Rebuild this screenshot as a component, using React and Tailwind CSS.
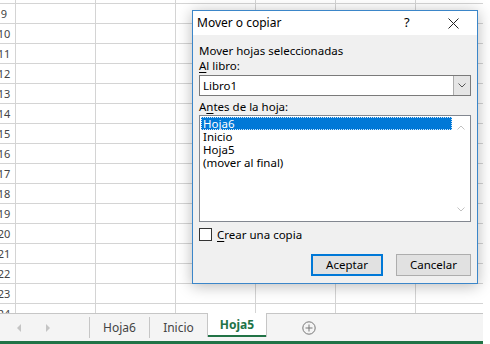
const ROWS = [8, 9, 10, 11, 12, 13, 14, 15, 16, 17, 18, 19, 20, 21, 22, 23, 24];
const COLS = [0, 1, 2, 3, 4, 5];
const SHEETS = ['Hoja6', 'Inicio', 'Hoja5', '(mover al final)'];

function Grid() {
  return (
    <div className="w-[483px] h-[313px] overflow-hidden bg-white">
      <div className="-mt-[16px]">
        {ROWS.map((r) => (
          <div key={r} className="flex h-[20px] border-b border-[#d4d4d4]">
            <div className="w-[16px] shrink-0 border-r border-[#d4d4d4] overflow-hidden flex items-center">
              <span className="block w-[22px] -ml-[7px] shrink-0 text-center text-[11px] text-[#444] leading-none">{r}</span>
            </div>
            {COLS.map((c) => (
              <div key={c} className="w-[80px] shrink-0 border-r border-[#d4d4d4]" />
            ))}
          </div>
        ))}
      </div>
    </div>
  );
}

function TabBar() {
  return (
    <div className="w-[483px] h-[28px] border-t border-[#c6c6c6] bg-[#f4f4f4] flex items-stretch text-[12px] text-[#444]">
      <div className="w-[90px] flex items-center border-r border-[#c6c6c6] my-[3px]">
        <span className="ml-[17px] w-0 h-0 border-y-[4px] border-y-transparent border-r-[4px] border-r-[#c4c4c4]" />
        <span className="ml-[25px] w-0 h-0 border-y-[4px] border-y-transparent border-l-[4px] border-l-[#c4c4c4]" />
      </div>
      <div className="w-[60px] flex items-center justify-center border-r border-[#c6c6c6] my-[3px]">Hoja6</div>
      <div className="w-[57px] flex items-center justify-center">Inicio</div>
      <div className="w-[60px] -mt-px mb-[4px] bg-white border-x border-[#c6c6c6] flex flex-col">
        <div className="flex-1 flex items-center justify-center font-bold text-[#217346] pt-[1px]">Hoja5</div>
        <div className="h-[2px] bg-[#217346]" />
      </div>
      <div className="ml-[35px] flex items-center">
        <svg width="14" height="14" viewBox="0 0 14 14" fill="none" stroke="#777" strokeWidth="1">
          <circle cx="7" cy="7" r="6.2" />
          <path d="M7 3.5v7M3.5 7h7" />
        </svg>
      </div>
    </div>
  );
}

function Chevron({ dir = 'down', color = '#555' }) {
  return (
    <svg width="8" height="5" viewBox="0 0 8 5" fill="none" stroke={color} strokeWidth="1">
      {dir === 'down' ? <path d="M0.5 0.5L4 4L7.5 0.5" /> : <path d="M0.5 4.5L4 1L7.5 4.5" />}
    </svg>
  );
}

function Dialog() {
  return (
    <div className="absolute left-[192px] top-[10px] w-[286px] h-[274px] border border-[#3b86c9] bg-[#f0f0f0] shadow-[0_2px_14px_rgba(0,0,0,0.28)] flex flex-col text-[11.5px] text-black">
      <div className="h-[24px] bg-white flex items-center pl-[4px] shrink-0 text-[12px]">
        <span className="flex-1">Mover o copiar</span>
        <span className="w-[10px] text-[13px] mr-[34px]">?</span>
        <svg width="11" height="11" viewBox="0 0 11 11" stroke="#222" strokeWidth="1" className="mr-[18px]">
          <path d="M0.5 0.5L10.5 10.5M10.5 0.5L0.5 10.5" />
        </svg>
      </div>
      <div className="flex-1 px-[6px] pt-[8px] flex flex-col">
        <div className="leading-[15px]">Mover hojas seleccionadas</div>
        <div className="leading-[15px]"><span className="underline underline-offset-2">A</span>l libro:</div>
        <div className="mt-[2px] h-[21px] bg-white border border-[#7a7a7a] flex items-stretch">
          <div className="flex-1 flex items-center pl-[3px]">Libro1</div>
          <div className="w-[17px] bg-[#e5e5e5] border-l border-[#acacac] flex items-center justify-center">
            <Chevron />
          </div>
        </div>
        <div className="mt-[3px] leading-[15px]">A<span className="underline underline-offset-2">n</span>tes de la hoja:</div>
        <div className="mt-[1px] h-[107px] bg-white border border-[#828790] flex p-px">
          <div className="flex-1 flex flex-col">
            {SHEETS.map((s, i) => (
              <div
                key={s}
                className={i === 0
                  ? 'h-[13px] leading-[11px] pl-[1px] bg-[#0078d7] text-white border border-dotted border-[#cfe6fb]'
                  : 'h-[13px] leading-[13px] pl-[2px]'}
              >
                {s}
              </div>
            ))}
          </div>
          <div className="w-[17px] flex flex-col items-center justify-between py-[8px]">
            <Chevron dir="up" color="#c2c2c2" />
            <Chevron color="#c2c2c2" />
          </div>
        </div>
        <div className="mt-[6px] h-[13px] flex items-center">
          <div className="w-[13px] h-[13px] bg-white border border-[#333]" />
          <span className="ml-[5px]"><span className="underline underline-offset-2">C</span>rear una copia</span>
        </div>
        <div className="mt-[13px] flex justify-end gap-[13px]">
          <button className="w-[72px] h-[22px] bg-[#e1e1e1] border-2 border-[#0078d7] text-[11.5px] text-black">Aceptar</button>
          <button className="w-[75px] h-[22px] bg-[#e1e1e1] border border-[#adadad] text-[11.5px] text-black">Cancelar</button>
        </div>
      </div>
    </div>
  );
}

export default function App() {
  return (
    <div className="relative w-[490px] h-[344px] overflow-hidden bg-white font-['Noto_Sans',sans-serif]">
      <Grid />
      <TabBar />
      <div className="w-[483px] h-[3px] bg-[#217346]" />
      <Dialog />
    </div>
  );
}
